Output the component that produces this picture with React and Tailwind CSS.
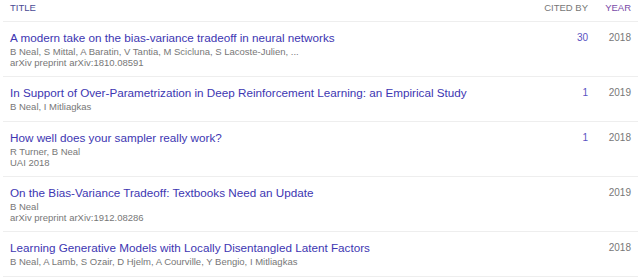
const PAPERS = [
  {
    title: 'A modern take on the bias-variance tradeoff in neural networks',
    authors: 'B Neal, S Mittal, A Baratin, V Tantia, M Scicluna, S Lacoste-Julien, ...',
    venue: 'arXiv preprint arXiv:1810.08591',
    cited: '30',
    year: '2018',
  },
  {
    title: 'In Support of Over-Parametrization in Deep Reinforcement Learning: an Empirical Study',
    authors: 'B Neal, I Mitliagkas',
    cited: '1',
    year: '2019',
  },
  {
    title: 'How well does your sampler really work?',
    authors: 'R Turner, B Neal',
    venue: 'UAI 2018',
    cited: '1',
    year: '2018',
  },
  {
    title: 'On the Bias-Variance Tradeoff: Textbooks Need an Update',
    authors: 'B Neal',
    venue: 'arXiv preprint arXiv:1912.08286',
    cited: '',
    year: '2019',
  },
  {
    title: 'Learning Generative Models with Locally Disentangled Latent Factors',
    authors: 'B Neal, A Lamb, S Ozair, D Hjelm, A Courville, Y Bengio, I Mitliagkas',
    cited: '',
    year: '2018',
  },
]

export default function App() {
  return (
    <div className="bg-white w-[641px] h-[277px] overflow-hidden px-[3px] font-['Liberation_Sans',Arial,sans-serif]">
      <div className="flex h-[22px] border-b border-[#eeeeee] text-[9.5px] leading-[14px] pt-[1px]">
        <div className="flex-1 pl-[7px] text-[#4a4a95]">TITLE</div>
        <div className="w-[60px] text-right text-[#777777]">CITED BY</div>
        <div className="w-[50px] pr-[7px] text-right text-[#7a4aa8]">YEAR</div>
      </div>
      {PAPERS.map((p) => (
        <div key={p.title} className={`flex border-b border-[#eeeeee] ${p.venue ? 'py-[8px]' : 'pt-[8px] pb-[9px]'}`}>
          <div className="flex-1 pl-[7px] min-w-0">
            <a href="#" className="block text-[11.7px] leading-[16px] text-[#3d36b2] whitespace-nowrap">{p.title}</a>
            <div className="text-[9.5px] leading-[11px] text-[#777777] whitespace-nowrap">{p.authors}</div>
            {p.venue && <div className="text-[9.5px] leading-[11px] text-[#777777]">{p.venue}</div>}
          </div>
          <div className="w-[60px] text-right text-[10px] leading-[16px] text-[#5a52c2]">{p.cited}</div>
          <div className="w-[50px] pr-[7px] text-right text-[10px] leading-[16px] text-[#777777]">{p.year}</div>
        </div>
      ))}
    </div>
  )
}
